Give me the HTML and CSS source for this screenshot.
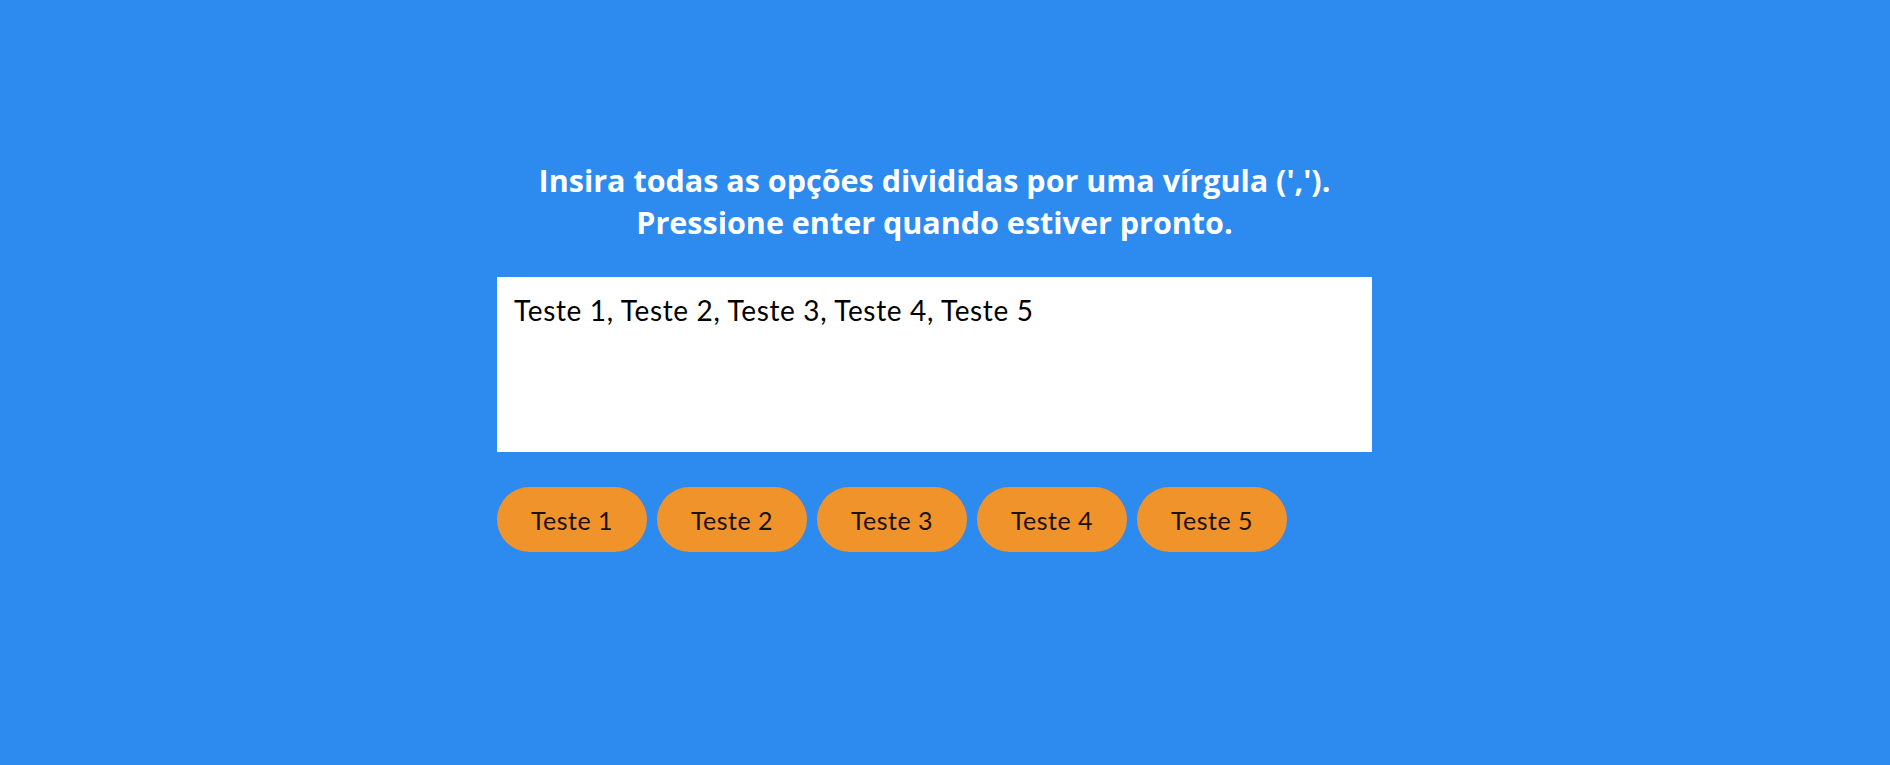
FILE: index.html
```html
<!DOCTYPE html>
<html lang="pt">
<head>
<meta charset="utf-8">
<title>Opções</title>
<link rel="stylesheet" href="styles.css">
</head>
<body>
<main class="page">
  <section class="panel">
    <h1 class="title">Insira todas as opções divididas por uma vírgula (',').<br>Pressione enter quando estiver pronto.</h1>
    <textarea class="entry" spellcheck="false">Teste 1, Teste 2, Teste 3, Teste 4, Teste 5</textarea>
    <div class="choices">
      <span class="choice">Teste 1</span>
      <span class="choice">Teste 2</span>
      <span class="choice">Teste 3</span>
      <span class="choice">Teste 4</span>
      <span class="choice">Teste 5</span>
    </div>
  </section>
</main>
</body>
</html>
```
FILE: styles.css
```css
* { box-sizing: border-box; }
html, body {
  margin: 0;
  height: 100%;
}
body {
  background: #2d8aef;
  font-family: Lato, "Open Sans", "Noto Sans", sans-serif;
  overflow: hidden;
}
.page {
  padding-top: 159px;
}
.panel {
  width: 875px;
  margin-left: calc(50% - 448px);
  display: flex;
  flex-direction: column;
}
.title {
  margin: 0 0 34px;
  color: #ffffff;
  font-family: "Open Sans", Lato, sans-serif;
  font-size: 30.5px;
  line-height: 42px;
  font-weight: 700;
  text-align: center;
}
.entry {
  display: block;
  width: 875px;
  height: 175px;
  border: 0;
  outline: none;
  resize: none;
  padding: 17px 17px;
  margin: 0;
  background: #ffffff;
  color: #000;
  font-family: Lato, "Open Sans", sans-serif;
  font-size: 28px;
  line-height: 1.2;
  letter-spacing: 0.65px;
}
.choices {
  display: flex;
  gap: 10px;
  margin-top: 35px;
}
.choice {
  width: 150px;
  height: 65px;
  border-radius: 33px;
  background: #f0932b;
  color: #1a1206;
  font-size: 25px;
  letter-spacing: 0.5px;
  display: flex;
  align-items: center;
  justify-content: center;
}
```
